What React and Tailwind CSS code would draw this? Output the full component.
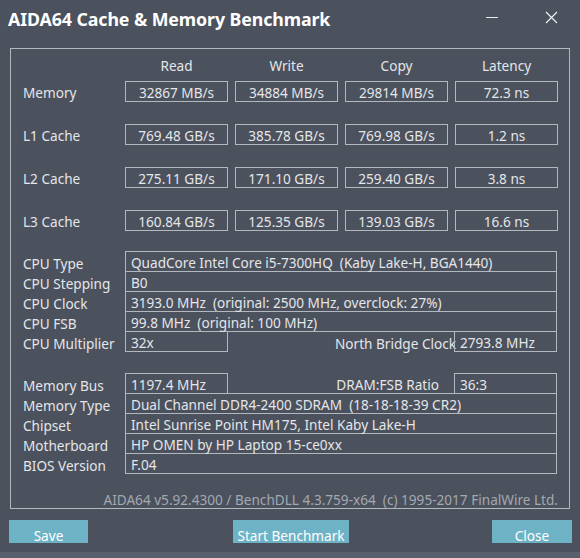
import React from 'react';

const font = { fontFamily: '"Noto Sans", "Open Sans", sans-serif' };

const bench = [
  { label: 'Memory', values: ['32867 MB/s', '34884 MB/s', '29814 MB/s', '72.3 ns'] },
  { label: 'L1 Cache', values: ['769.48 GB/s', '385.78 GB/s', '769.98 GB/s', '1.2 ns'] },
  { label: 'L2 Cache', values: ['275.11 GB/s', '171.10 GB/s', '259.40 GB/s', '3.8 ns'] },
  { label: 'L3 Cache', values: ['160.84 GB/s', '125.35 GB/s', '139.03 GB/s', '16.6 ns'] },
];

const cpuRows = [
  ['CPU Type', 'QuadCore Intel Core i5-7300HQ  (Kaby Lake-H, BGA1440)'],
  ['CPU Stepping', 'B0'],
  ['CPU Clock', '3193.0 MHz  (original: 2500 MHz, overclock: 27%)'],
  ['CPU FSB', '99.8 MHz  (original: 100 MHz)'],
];

const memRows = [
  ['Memory Type', 'Dual Channel DDR4-2400 SDRAM  (18-18-18-39 CR2)'],
  ['Chipset', 'Intel Sunrise Point HM175, Intel Kaby Lake-H'],
  ['Motherboard', 'HP OMEN by HP Laptop 15-ce0xx'],
  ['BIOS Version', 'F.04'],
];

const line = 'border-[#b3b7be]';

const Label = ({ children, pad = 'pt-[4px]' }) => (
  <div className={`w-[114px] shrink-0 pl-[12px] ${pad} whitespace-nowrap`}>{children}</div>
);

const InfoRows = ({ rows }) => (
  <div className="flex flex-col">
    {rows.map(([k]) => (
      <div key={k} className="flex h-[20px] items-center">
        <Label>{k}</Label>
      </div>
    ))}
  </div>
);

const Cell = ({ children, className = '' }) => (
  <div className={`h-[20px] flex items-center pl-[5px] pt-[4px] whitespace-pre ${className}`}>{children}</div>
);

const Button = ({ children, className = '' }) => (
  <div className={`h-[23px] bg-[#6db3c5] text-white text-center pt-[6px] leading-[20px] overflow-hidden shrink-0 ${className}`}>
    {children}
  </div>
);

export default function App() {
  return (
    <div
      className="w-[580px] h-[558px] bg-[#4b515d] text-[#e4e6ea] text-[13.6px] flex flex-col overflow-hidden"
      style={font}
    >
      {/* Title bar */}
      <div className="h-[48px] flex items-start shrink-0">
        <div className="pl-[8px] pt-[6px] text-[17.8px] font-bold text-white tracking-[-0.1px] leading-[26px]">
          AIDA64 Cache &amp; Memory Benchmark
        </div>
        <div className="ml-auto flex items-start">
          <div className="w-[12px] h-px bg-[#e8eaee] mt-[17px] mr-[47px]" />
          <svg width="13" height="13" viewBox="0 0 13 13" className="mt-[11px] mr-[22px]">
            <path d="M1 1L12 12M12 1L1 12" stroke="#eef0f3" strokeWidth="1.2" />
          </svg>
        </div>
      </div>

      {/* Main panel */}
      <div className={`ml-[10px] w-[560px] h-[461px] border ${line} shrink-0 flex flex-col overflow-hidden`}>
        {/* header */}
        <div className="flex h-[18px] mt-[8px] leading-[18px]">
          <div className="w-[114px] shrink-0" />
          <div className="flex gap-[7px]">
            {['Read', 'Write', 'Copy', 'Latency'].map((h) => (
              <div key={h} className="w-[103px] text-center">{h}</div>
            ))}
          </div>
        </div>

        <div className="flex flex-col gap-[22px] mt-[6px]">
          {bench.map((r) => (
            <div key={r.label} className="flex items-center h-[21px]">
              <Label pad="pt-[3px]">{r.label}</Label>
              <div className="flex gap-[7px]">
                {r.values.map((v, i) => (
                  <div
                    key={i}
                    className={`w-[103px] h-[21px] border ${line} flex items-center justify-center pt-[2px] leading-none whitespace-nowrap`}
                  >
                    {v}
                  </div>
                ))}
              </div>
            </div>
          ))}
        </div>

        {/* CPU info */}
        <div className="flex mt-[21px]">
          <div className="flex flex-col">
            <InfoRows rows={cpuRows} />
            <div className="flex h-[20px] items-center">
              <Label>CPU Multiplier</Label>
            </div>
          </div>
          <div className="flex flex-col w-[432px] mt-[-1px]">
            <div className={`border-t border-x ${line}`}>
              {cpuRows.map(([k, v]) => (
                <Cell key={k} className={`border-b ${line}`}>{v}</Cell>
              ))}
            </div>
            <div className="flex h-[20px] items-center">
              <Cell className={`w-[103px] shrink-0 border-x border-b ${line}`}>32x</Cell>
              <div className="ml-auto pt-[4px] whitespace-nowrap -mr-[2px]">North Bridge Clock</div>
              <Cell className={`w-[103px] shrink-0 border-x border-b ${line}`}>2793.8 MHz</Cell>
            </div>
          </div>
        </div>

        {/* Memory info */}
        <div className="flex mt-[22px]">
          <div className="flex flex-col">
            <div className="flex h-[20px] items-center">
              <Label>Memory Bus</Label>
            </div>
            <InfoRows rows={memRows} />
          </div>
          <div className="flex flex-col w-[432px] mt-[-1px]">
            <div className="flex h-[20px] items-center">
              <Cell className={`w-[103px] shrink-0 border-x border-t ${line}`}>1197.4 MHz</Cell>
              <div className="ml-auto pr-[15px] pt-[4px] whitespace-nowrap">DRAM:FSB Ratio</div>
              <Cell className={`w-[103px] shrink-0 border-x border-t ${line}`}>36:3</Cell>
            </div>
            <div className={`border-t border-x ${line}`}>
              {memRows.map(([k, v]) => (
                <Cell key={k} className={`border-b ${line}`}>{v}</Cell>
              ))}
            </div>
          </div>
        </div>

        {/* footer */}
        <div className="mt-[17px] pr-[11px] text-right text-[#a4a8b0] leading-[18px] whitespace-pre">
          AIDA64 v5.92.4300 / BenchDLL 4.3.759-x64  (c) 1995-2017 FinalWire Ltd.
        </div>
      </div>

      {/* buttons */}
      <div className="flex mt-[11px] pl-[9px] h-[23px] shrink-0">
        <Button className="w-[79px]">Save</Button>
        <Button className="w-[116px] ml-[145px]">Start Benchmark</Button>
        <Button className="w-[80px] ml-[143px]">Close</Button>
      </div>
      <div className="mt-[9px] flex-1 bg-[#58606e]" />
    </div>
  );
}
